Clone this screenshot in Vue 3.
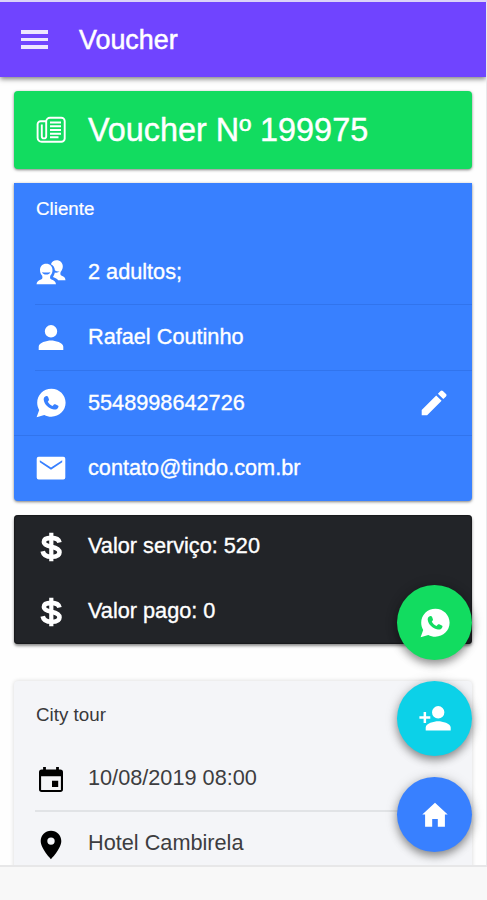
<script setup>
const clientRows = [
  { icon: 'people', text: '2 adultos;', line: 'inset' },
  { icon: 'person', text: 'Rafael Coutinho', line: 'inset' },
  { icon: 'whatsapp', text: '5548998642726', line: 'full', editable: true },
  { icon: 'mail', text: 'contato@tindo.com.br', line: 'none' },
]
const values = ['Valor serviço: 520', 'Valor pago: 0']
const tourRows = [
  { icon: 'calendar', text: '10/08/2019 08:00', line: 'inset' },
  { icon: 'pin', text: 'Hotel Cambirela', line: 'none' },
]
const actions = [
  { icon: 'whatsapp', tone: 'green' },
  { icon: 'addPerson', tone: 'cyan' },
  { icon: 'home', tone: 'blue' },
]
const icons = {
  people:
    'M20.5 2.2c3.800 0 6.300 2.700 6.300 6.100 0 2.300-.8 4.100-2.200 5.700-.5 2.300-.2 3.200 1.200 3.800 2.200.9 3.500 1.900 3.700 4.500h-7.300c-1-1.500-2.600-2.400-5.300-3.300.8-1.300 1.600-2.800 1.900-4.500 1.800.5 3.500.2 4.800-.9-1.500.1-3.200-.2-4.700-1.400-.3-2.900-1.600-4.900-4-6 .9-2.400 3-4 5.600-4z M10.200 5.700c3.800 0 6.300 2.700 6.300 6.300 0 2.400-.8 4.300-2.200 5.800-.5 2.200-.2 3.100 1.200 3.600 2.600 1 4.200 1.900 4.500 4.800H.5c.3-2.900 1.900-3.800 4.500-4.800 1.400-.5 1.700-1.400 1.200-3.600C4.800 16.300 4 14.400 4 12c0-3.600 2.400-6.300 6.200-6.300z M6 14.200c.7 1.500 2.200 2.300 4.200 2.300s3.500-.8 4.200-2.300c-2.600.5-5.800.5-8.400 0z',
  person:
    'M15 14.500a6.200 6.200 0 1 0 0-12.400 6.200 6.200 0 0 0 0 12.400z M15 17.500c-4.200 0-12.300 2.100-12.300 6.200V27h24.600v-3.300c0-4.100-8.100-6.200-12.300-6.200z',
  whatsapp:
    'M15.400.8C7.500.8 1.200 7 1.200 14.800c0 2.600.7 5.100 2 7.200L.6 29.300l7.700-2.400c2.100 1.200 4.500 1.800 7.100 1.800 7.900 0 14.200-6.200 14.200-13.900S23.300.8 15.400.8z M10.400 8c.8-.1 1.400.2 1.700 1l.8 2.200c.2.600.1 1-.2 1.400l-.9 1.200c1 1.900 2.600 3.300 4.800 4.200l1.300-1.400c.4-.5.800-.6 1.400-.3l2.500 1.200c.7.300.8.700.6 1.400-.6 2-2.500 2.900-4.500 2.500-5.300-1-9.500-4.900-10.200-9.700-.2-1.700.9-3.500 2.700-3.700z',
  mail: 'M2.700 3.700h24.600a2 2 0 0 1 2 2v18.800a2 2 0 0 1-2 2H2.700a2 2 0 0 1-2-2V5.700a2 2 0 0 1 2-2z M3.800 7.300v2l11.200 7.500 11.200-7.500v-2L15 14.600z',
  calendar:
    'M24.300 4.600h-1.400V2h-2.800v2.600H9.900V2H7.100v2.600H5.700A2.700 2.700 0 0 0 3 7.300v16.900a2.700 2.700 0 0 0 2.700 2.700h18.600a2.700 2.700 0 0 0 2.700-2.700V7.300a2.700 2.700 0 0 0-2.700-2.700z M24.900 24.900H5.100V11.200h19.800z M16 15.800h6.200V22H16z',
  pin: 'M15 .8C9.200.8 4.700 5.300 4.700 11.100 4.700 18.800 15 29.200 15 29.200s10.300-10.400 10.300-18.100C25.300 5.300 20.800.8 15 .8z M15 7.400a3.700 3.700 0 1 1 0 7.400 3.700 3.700 0 0 1 0-7.400z',
  addPerson:
    'M18.200 14.500a6.200 6.200 0 1 0 0-12.400 6.200 6.200 0 0 0 0 12.400z M18.200 17.200c-4.200 0-12.500 2.100-12.500 6.200v3.100h25v-3.100c0-4.100-8.300-6.200-12.500-6.200z M3.600 8.100h2.500v4.200h4.200v2.500H6.100V19H3.600v-4.200H-.6v-2.500h4.200z',
  home: 'M15 2.700 2.300 14.600h2.800v12.200h7.100v-7.900h5.600v7.900h7.100V14.600h2.800z',
  edit: 'M2.700 21.900v5.400h5.400L22.600 12.800l-5.400-5.400z M27 8.400c.7-.7.7-1.600 0-2.300L23.900 3c-.7-.7-1.600-.7-2.300 0l-2.700 2.700 5.400 5.400z',
}
</script>

<template>
  <div class="screen">
    <main class="phone">
      <header class="toolbar">
        <div class="burger"><i></i><i></i><i></i></div>
        <h1>Voucher</h1>
      </header>

      <div class="content">
        <section class="card voucher">
          <svg class="icon" viewBox="0 0 30 30" fill="none" stroke="currentColor">
            <path d="M14 2.700h11.300a3.400 3.400 0 0 1 3.400 3.400v17.300a3.400 3.400 0 0 1-3.400 3.400H5.600a4 4 0 0 1-4-4V9.200a3 3 0 0 1 3-3h5.600M10.200 22V6.500A3.800 3.800 0 0 1 14 2.700M5.800 9.500v11.700a2.200 2.200 0 0 0 4.400 0" stroke-width="1.900" />
            <path d="M14 7.500h11M14 11.300h11M14 15h11M14 18.700h11M14 22.300h8.500" stroke-width="1.900" />
          </svg>
          <span>Voucher Nº 199975</span>
        </section>

        <section class="card client">
          <h2>Cliente</h2>
          <div v-for="row in clientRows" :key="row.text" class="row" :class="row.line">
            <svg class="icon" viewBox="0 0 30 30"><path :d="icons[row.icon]" /></svg>
            <div class="label">
              <span>{{ row.text }}</span>
              <svg v-if="row.editable" class="icon" viewBox="0 0 30 30"><path :d="icons.edit" /></svg>
            </div>
          </div>
        </section>

        <section class="card values">
          <div v-for="value in values" :key="value" class="row">
            <svg class="icon" viewBox="0 0 30 30" fill="none" stroke="currentColor">
              <path d="M23.500 10.500C22.700 7.200 19.700 5.900 15.300 5.900c-4.600 0-7.400 1.400-7.400 4.100 0 3 3.200 3.900 7.400 4.700 4.700 1 8.200 2.200 8.200 5.500 0 3-3.200 4.600-8 4.600-5.100 0-8.100-1.800-8.800-5.500" stroke-width="4.600" />
              <path d="M15.300.8v28.400" stroke-width="4.200" />
            </svg>
            <div class="label"><span>{{ value }}</span></div>
          </div>
        </section>

        <section class="card tour">
          <h2>City tour</h2>
          <div v-for="row in tourRows" :key="row.text" class="row" :class="row.line">
            <svg class="icon" viewBox="0 0 30 30"><path :d="icons[row.icon]" /></svg>
            <div class="label"><span>{{ row.text }}</span></div>
          </div>
        </section>
      </div>
    </main>

    <nav class="actions">
      <button v-for="action in actions" :key="action.icon" :class="action.tone">
        <svg class="icon" viewBox="0 0 30 30"><path :d="icons[action.icon]" /></svg>
      </button>
    </nav>
  </div>
</template>

<style>
body {
  margin: 0;
  background: #f8f8f8;
}
</style>

<style scoped>
.screen {
  position: relative;
  box-sizing: border-box;
  height: 900px;
  overflow: hidden;
  padding-top: 2px;
  background: linear-gradient(#dcd3f8 0 2px, #f8f8f8 2px);
  font-family: "Liberation Sans", Arial, sans-serif;
}
.phone {
  box-sizing: border-box;
  height: 865px;
  overflow: hidden;
  border-right: 1px solid #e9e9eb;
  border-bottom: 2px solid #e7e7e8;
  background: #fefefe;
}
.toolbar {
  display: flex;
  align-items: center;
  gap: 31px;
  height: 75px;
  padding-left: 21px;
  background: #7044ff;
  box-shadow: 0 2px 5px rgba(0, 0, 0, 0.5);
  color: #fff;
}
.burger {
  display: grid;
  gap: 4px;
  width: 27px;
}
.burger i {
  height: 3.5px;
  background: #ede6ff;
}
h1 {
  margin: 0;
  font-size: 26.9px;
  font-weight: 400;
  line-height: 32px;
  -webkit-text-stroke: 0.5px currentColor;
}
.content {
  display: flex;
  flex-direction: column;
  gap: 14px;
  padding: 14px 14px 0;
}
.card {
  box-sizing: border-box;
  overflow: hidden;
  border-radius: 4px;
  box-shadow: 0 1px 3px rgba(0, 0, 0, 0.5);
  color: #fff;
}
.icon {
  display: block;
  flex: none;
  width: 30px;
  height: 30px;
  overflow: visible;
}
.icon path {
  fill-rule: evenodd;
}
.icon:not([fill]) {
  fill: currentColor;
}
.voucher {
  display: flex;
  align-items: center;
  gap: 22px;
  height: 78px;
  padding-left: 22px;
  background: #12dc60;
  font-size: 32.4px;
  -webkit-text-stroke: 0.4px currentColor;
}
.voucher span {
  padding-top: 1px;
}
.client {
  --line: #3174ed;
  --thick: 1px;
  height: 318px;
  border-radius: 0 0 4px 4px;
  background: #3880ff;
}
h2 {
  box-sizing: border-box;
  height: 57px;
  margin: 0;
  padding: 14px 0 0 22px;
  font-size: 18.8px;
  font-weight: 400;
  line-height: 23px;
  -webkit-text-stroke: 0.2px currentColor;
}
.row {
  display: flex;
  align-items: stretch;
  box-sizing: border-box;
  height: 65.25px;
  padding-left: 22px;
  font-size: 21.7px;
}
.row > .icon {
  align-self: center;
  margin-right: 22px;
}
.label {
  display: flex;
  flex: 1;
  align-items: center;
  justify-content: space-between;
  padding-right: 23px;
}
.label span {
  padding-bottom: 1px;
  -webkit-text-stroke: 0.35px currentColor;
}
.row.inset {
  background: linear-gradient(var(--line), var(--line)) 21px 100% / 100% var(--thick) no-repeat;
}
.row.full {
  background: linear-gradient(var(--line), var(--line)) 0 100% / 100% var(--thick) no-repeat;
}
.values {
  height: 129px;
  background: #222428;
  box-shadow: inset 0 0 2px #000, 0 2px 3px rgba(0, 0, 0, 0.45);
}
.values .row {
  height: 64.5px;
}
.values .label span {
  padding-bottom: 2px;
}
.tour {
  --line: #e1e3e6;
  --thick: 2px;
  height: 210px;
  margin-top: 23px;
  background: #f4f5f8;
  box-shadow: 0 0 4px rgba(0, 0, 0, 0.16);
  color: #000;
}
.tour h2 {
  height: 66px;
  padding-top: 22px;
  color: #39393b;
  -webkit-text-stroke: 0;
}
.tour .label {
  color: #3d3d40;
}
.tour .label span {
  padding-bottom: 3px;
  -webkit-text-stroke: 0;
}
.actions {
  position: absolute;
  top: 585px;
  right: 15px;
  display: grid;
  gap: 21px;
}
button {
  display: grid;
  place-items: center;
  width: 75px;
  height: 75px;
  padding: 0;
  border: 0;
  border-radius: 50%;
  box-shadow: 0 4px 9px rgba(0, 0, 0, 0.38), 0 1px 14px rgba(0, 0, 0, 0.14);
  color: #fff;
}
.green {
  background: #12dc60;
}
.cyan {
  background: #0cd1e8;
}
.blue {
  background: #3880ff;
}
</style>
